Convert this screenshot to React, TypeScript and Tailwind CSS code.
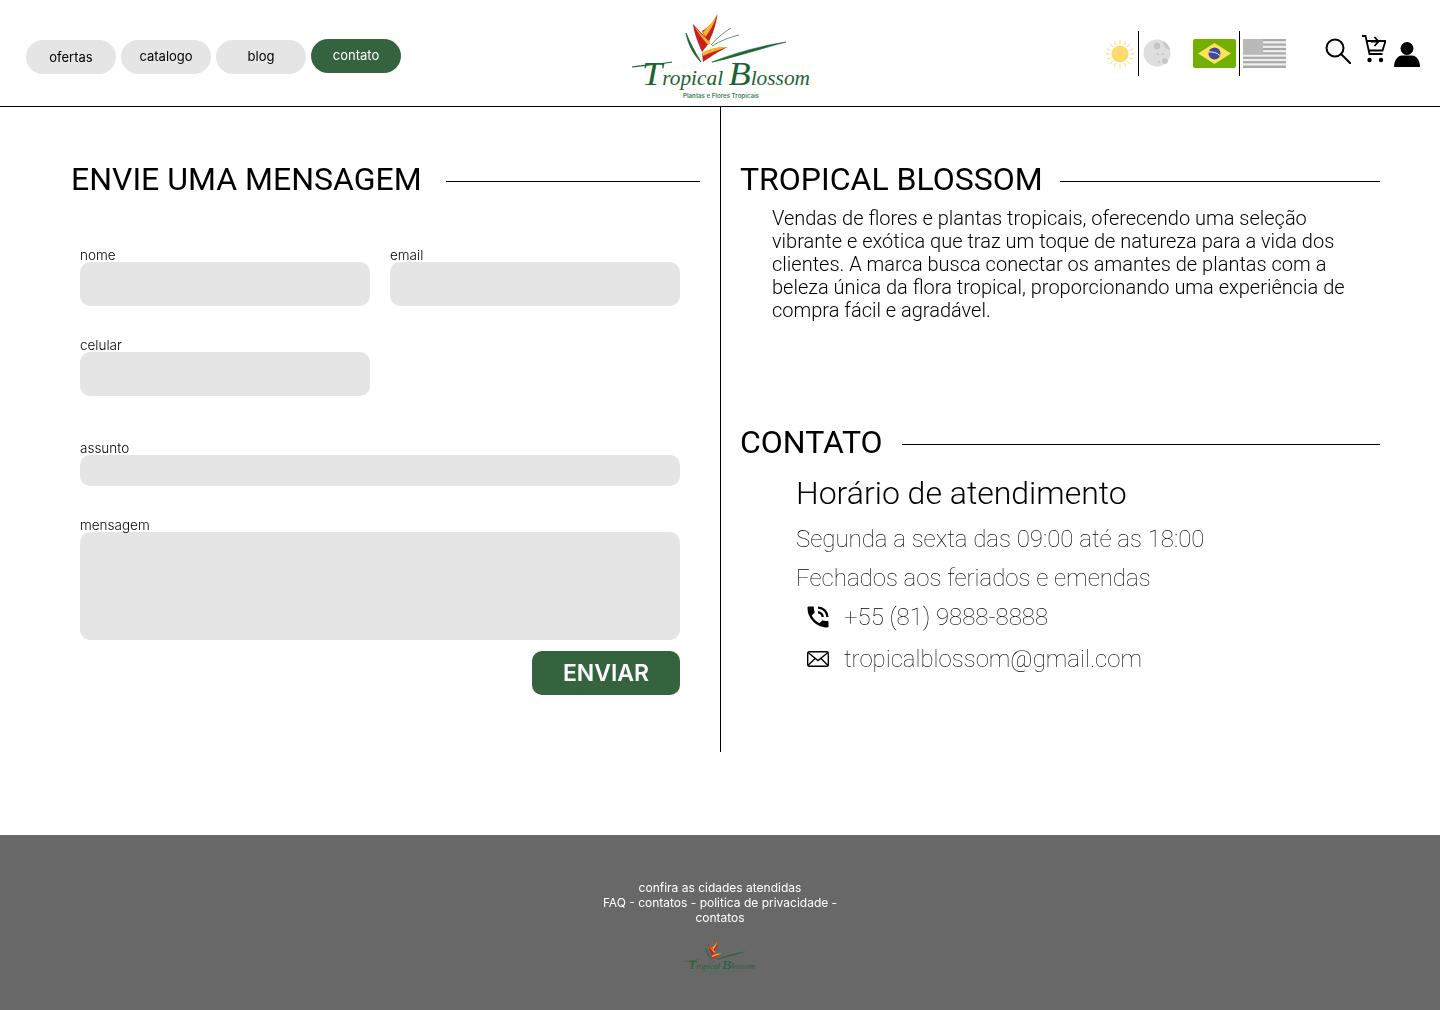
import { MdPhoneInTalk } from 'react-icons/md'

const Logo = ({ className }: { className: string }) => (
  <svg viewBox="0 0 240 106" className={className}>
    <path d="M117.500 14C116 26 112 36 108 43L102 31C109 27 114 21 117.500 14Z" fill="#c8201e" />
    <path d="M117 15C112 23 107 28 103 32L105.500 37C110 31 114 24 117 15Z" fill="#f4b731" />
    <path d="M93 24C98 30 105 36 110 42L102 52C98 43 94 33 93 24Z" fill="#c8201e" />
    <path d="M94 26C99 32 105 38 111 43L108 45C103 39 98 33 94 26Z" fill="#f4b731" />
    <path d="M127.500 47C118 52 113 55 103 62L102 53C110 49 118 47 127.500 47Z" fill="#c8201e" />
    <path d="M127.500 47C118 47 109 48 102 53L103 56C111 52 119 50 127.500 47Z" fill="#f4b731" />
    <path d="M86 33C88 44 93 54 101 62C95 52 90 43 86 33Z" fill="#1c6333" stroke="#1c6333" strokeWidth="0.800" />
    <path d="M111 45C117 38 124 32 131 28M112 46C120 41 130 37 139 35" stroke="#3d7a52" strokeWidth="0.800" fill="none" />
    <path d="M112 62C135 53 160 46 186 42C160 49 135 57 113 62Z" fill="#1c6333" stroke="#1c6333" strokeWidth="0.600" />
    <path d="M32 67C48 65 60 64 72 62" stroke="#1c6333" strokeWidth="1.100" fill="none" />
    <text x="42" y="85" textLength="168" lengthAdjust="spacingAndGlyphs" fill="#1c6333" fontSize="20" className="font-['Liberation_Serif'] italic">
      <tspan fontSize="34">T</tspan>ropical <tspan fontSize="34">B</tspan>lossom
    </text>
    <text x="83" y="98" textLength="76" lengthAdjust="spacingAndGlyphs" fill="#3f7f57" fontSize="6" className="font-['Inter'] font-semibold">
      Plantas e Flores Tropicais
    </text>
  </svg>
)

const Sun = () => (
  <svg viewBox="0 0 30 30" className="w-[30px] h-[30px] mt-[2px]">
    <circle cx="15" cy="15" r="8.500" fill="#fedb70" />
    <g stroke="#fedb70" strokeWidth="1" strokeLinecap="round">
      <path d="M15 1v3.500M15 25.500V29M1 15h3.500M25.500 15H29M5 5l2.500 2.500M22.500 22.500L25 25M5 25l2.500-2.500M22.500 7.500L25 5" />
      <path d="M9.500 2.500l1 3M20.500 2.500l-1 3M9.500 27.500l1-3M20.500 27.500l-1-3M2 10l3 1M28 10l-3 1M2 20l3-1M28 20l-3-1" />
    </g>
  </svg>
)

const Moon = () => (
  <svg viewBox="0 0 28 28" className="w-[28px] h-[28px]">
    <circle cx="14" cy="14" r="13.500" fill="#dedede" />
    <circle cx="14" cy="7" r="3.200" fill="#c4c4c4" />
    <path d="M20 2C24 4 26 7 27 11C24 10 20 7 20 2Z" fill="#c4c4c4" />
    <circle cx="22" cy="22" r="2.800" fill="#c4c4c4" />
    <circle cx="15" cy="15" r="1" fill="#c4c4c4" />
    <circle cx="20" cy="15" r="1" fill="#c4c4c4" />
    <circle cx="16" cy="23" r="1" fill="#c4c4c4" />
  </svg>
)

const BrazilFlag = () => (
  <svg viewBox="0 0 43 29" className="w-[43px] h-[29px]">
    <rect width="43" height="29" rx="2" fill="#73af00" />
    <path d="M21.500 4L38 14.500L21.500 25L5 14.500Z" fill="#ffe15a" />
    <circle cx="21.500" cy="14.500" r="6" fill="#41479b" />
    <path d="M15.800 13C19 12.500 24 13.500 27 16.500" stroke="#f5f5f5" strokeWidth="1" fill="none" />
  </svg>
)

const UsFlag = () => (
  <svg viewBox="0 0 43 29" className="w-[43px] h-[29px]">
    <rect width="43" height="29" rx="2" fill="#f0f0f0" />
    <g fill="#a9a9a9">
      <rect y="0" width="43" height="2.200" />
      <rect y="4.500" width="43" height="2.200" />
      <rect y="8.900" width="43" height="2.200" />
      <rect y="13.300" width="43" height="2.200" />
      <rect y="17.700" width="43" height="2.200" />
      <rect y="22.100" width="43" height="2.200" />
      <rect y="26.500" width="43" height="2.500" />
    </g>
    <rect width="20" height="15.500" fill="#b9b9b9" />
  </svg>
)

const SearchIcon = () => (
  <svg viewBox="0 0 26 26" className="w-[26px] h-[26px]" fill="none" stroke="#000" strokeWidth="2">
    <circle cx="10" cy="10" r="8.500" />
    <path d="M16 16L25.500 25.500" strokeLinecap="round" />
  </svg>
)

const CartIcon = () => (
  <svg viewBox="0 0 24 28" className="w-[24px] h-[28px]" fill="none" stroke="#000" strokeWidth="1.800">
    <path d="M0 1H3.500L7.500 19H20.500" />
    <path d="M4.500 6L23.500 6L20.500 15.500H6.500" />
    <path d="M9 6.500H16M12.500 2L16.500 6.500L12.500 11" />
    <circle cx="7.500" cy="25" r="2.200" fill="#000" stroke="none" />
    <circle cx="19" cy="25" r="2.200" fill="#000" stroke="none" />
  </svg>
)

const UserIcon = () => (
  <svg viewBox="0 0 26 25" className="w-[26px] h-[25px]" fill="#000">
    <circle cx="13" cy="6.500" r="6.500" />
    <path d="M0 25C0 18 4 13.500 8 13.500H18C22 13.500 26 18 26 25Z" />
  </svg>
)

const MailIcon = () => (
  <svg viewBox="0 0 22 16" className="w-[22px] h-[16px]" fill="none" stroke="#000" strokeWidth="1.400">
    <rect x="0.700" y="0.700" width="20.600" height="14.600" rx="1.500" />
    <path d="M1 1.500L11 9.500L21 1.500M1 14.500L8 7.500M21 14.500L14 7.500" />
  </svg>
)

const Field = ({ label, className, boxClass }: { label: string; className: string; boxClass: string }) => (
  <div className={className}>
    <label className="block text-[13.500px] leading-[14px] text-black font-['Inter'] font-light">{label}</label>
    <div className={`bg-[#e5e5e5] rounded-[10px] ${boxClass}`} />
  </div>
)

const Heading = ({ title, gap }: { title: string; gap: string }) => (
  <div className="flex items-center">
    <h2 className={`text-[32px] leading-[38px] text-black font-['Roboto'] whitespace-nowrap ${gap}`}>{title}</h2>
    <div className="flex-1 h-px bg-black mt-[5px]" />
  </div>
)

export default function App() {
  return (
    <div className="w-[1440px] h-[1010px] bg-white flex flex-col font-['Inter',sans-serif]">
      <header className="h-[107px] border-b border-black flex items-center pl-[26px]">
        <nav className="flex items-start self-start mt-[39px] gap-[5px] text-[13px] text-black w-[375px] will-change-transform">
          <a className="w-[90px] h-[34px] mt-[1px] pt-[2px] rounded-[17px] bg-[#e5e5e5] flex items-center justify-center">ofertas</a>
          <a className="w-[90px] h-[34px] mt-[1px] rounded-[17px] bg-[#e5e5e5] flex items-center justify-center">catalogo</a>
          <a className="w-[90px] h-[34px] mt-[1px] rounded-[17px] bg-[#e5e5e5] flex items-center justify-center">blog</a>
          <a className="w-[90px] h-[34px] rounded-[17px] bg-[#34633d] text-white flex items-center justify-center">contato</a>
        </nav>
        <Logo className="w-[240px] h-[106px] ml-[199px] shrink-0 self-start" />
        <div className="flex items-center ml-[265px]">
          <Sun />
          <div className="w-px h-[45px] bg-black ml-[3px]" />
          <div className="ml-[4px]"><Moon /></div>
          <div className="ml-[22px]"><BrazilFlag /></div>
          <div className="w-px h-[45px] bg-black ml-[3px]" />
          <div className="ml-[3px]"><UsFlag /></div>
          <div className="ml-[39px] mb-[4px]"><SearchIcon /></div>
          <div className="ml-[11px] mb-[8px]"><CartIcon /></div>
          <div className="ml-[8px] mt-[3px]"><UserIcon /></div>
        </div>
      </header>

      <main className="flex h-[645px]">
        <section className="w-[721px] border-r border-black pl-[71px] pr-[20px] pt-[53px] will-change-transform">
          <Heading title="ENVIE UMA MENSAGEM" gap="mr-[24px]" />
          <form className="pl-[9px] pr-[20px] pt-[50px]">
            <div className="flex gap-[20px]">
              <Field label="nome" className="w-[290px]" boxClass="h-[44px]" />
              <Field label="email" className="w-[290px]" boxClass="h-[44px]" />
            </div>
            <Field label="celular" className="w-[290px] mt-[32px]" boxClass="h-[44px]" />
            <Field label="assunto" className="mt-[45px]" boxClass="h-[31px]" />
            <Field label="mensagem" className="mt-[32px]" boxClass="h-[108px]" />
            <div className="flex justify-end mt-[11px]">
              <button type="button" className="w-[148px] h-[44px] rounded-[10px] bg-[#34633d] text-white text-[23px] font-semibold">ENVIAR</button>
            </div>
          </form>
        </section>
        <section className="flex-1 pl-[19px] pr-[60px] pt-[53px] font-['Roboto'] will-change-transform">
          <Heading title="TROPICAL BLOSSOM" gap="mr-[17px]" />
          <p className="ml-[32px] mt-[9px] w-[590px] text-[20px] leading-[23px] font-light text-black">
            Vendas de flores e plantas tropicais, oferecendo uma seleção vibrante e exótica que traz um toque de natureza para a vida dos clientes. A marca busca conectar os amantes de plantas com a beleza única da flora tropical, proporcionando uma experiência de compra fácil e agradável.
          </p>
          <div className="mt-[101px]">
            <Heading title="CONTATO" gap="mr-[19px]" />
          </div>
          <div className="ml-[56px] mt-[13px]">
            <h3 className="text-[32px] leading-[39px] text-black font-light">Horário de atendimento</h3>
            <p className="text-[24px] leading-[29px] mt-[12px] text-black font-thin">Segunda a sexta das 09:00 até as 18:00</p>
            <p className="text-[24px] leading-[29px] mt-[10px] text-black font-thin">Fechados aos feriados e emendas</p>
            <div className="flex items-center mt-[9px] h-[29px] text-[24px] text-black font-thin">
              <MdPhoneInTalk className="w-[28px] h-[28px] ml-[8px] mr-[12px] text-black" />
              +55 (81) 9888-8888
            </div>
            <div className="flex items-center mt-[13px] h-[29px] text-[24px] text-black font-thin">
              <div className="ml-[11px]"><MailIcon /></div>
              <span className="ml-[15px]">tropicalblossom@gmail.com</span>
            </div>
          </div>
        </section>
      </main>

      <div className="h-[83px]" />

      <footer className="flex-1 bg-[#696868] flex flex-col items-center pt-[45px]">
        <p className="w-[240px] text-center text-[12px] leading-[15px] text-white will-change-transform">
          confira as cidades atendidas<br />FAQ - contatos - politica de privacidade -<br />contatos
        </p>
        <Logo className="w-[96px] h-[42px] mt-[10px] -translate-x-[1px]" />
      </footer>
    </div>
  )
}
